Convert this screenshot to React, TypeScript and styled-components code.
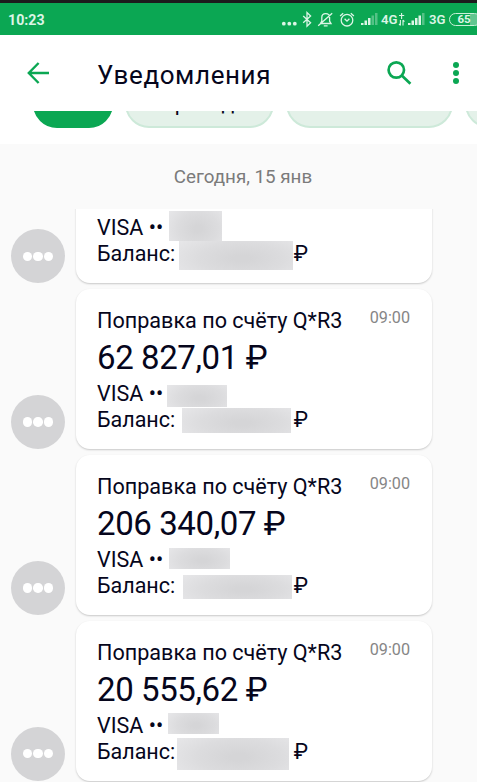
import styled, { createGlobalStyle } from "styled-components";

const GlobalStyle = createGlobalStyle`
  * {
    box-sizing: border-box;
  }
  body {
    margin: 0;
    background-color: #fafafa;
    font-family: Roboto, "Noto Sans", sans-serif;
    color: #06061c;
  }
`;

const Container = styled.div`
  width: 477px;
  height: 782px;
  display: flex;
  flex-direction: column;
  overflow: hidden;
  background-color: #fafafa;
`;

const StatusBar = styled.div`
  height: 35px;
  flex-shrink: 0;
  display: flex;
  align-items: center;
  padding-left: 8px;
  border-top: 3px solid #1c1c1c;
  background-color: #0ba753;
  color: #dcf5e6;
  .time {
    width: 273px;
    flex-shrink: 0;
    font-size: 14.2px;
    font-weight: 700;
    line-height: 30px;
    padding-top: 2px;
  }
  svg {
    display: block;
    flex-shrink: 0;
  }
`;

const Network = styled.span<{ $width: number }>`
  width: ${({ $width }) => $width}px;
  flex-shrink: 0;
  font-size: 13.2px;
  font-weight: 600;
  line-height: 30px;
  padding-top: 1px;
  white-space: nowrap;
`;

const Battery = styled.div`
  width: 32px;
  height: 13px;
  flex-shrink: 0;
  display: flex;
  align-items: center;
  padding-left: 7.5px;
  border: 1.3px solid #c9efd8;
  border-radius: 7px;
  background: linear-gradient(90deg, #0ba753 68%, #62c690 68%);
  font-size: 11.5px;
  font-weight: 700;
`;

const Toolbar = styled.header`
  height: 76px;
  flex-shrink: 0;
  display: flex;
  align-items: center;
  padding: 0 17px 0 26px;
  background-color: #fff;
  svg {
    display: block;
  }
  h1 {
    flex: 1;
    margin: 0 0 0 47px;
    padding-top: 3px;
    font-size: 26px;
    font-weight: 400;
    letter-spacing: 0.6px;
  }
  .menu {
    margin-left: 40px;
  }
`;

const Chips = styled.div`
  height: 33px;
  flex-shrink: 0;
  display: flex;
  align-items: flex-end;
  gap: 12px;
  padding: 0 0 16px 33px;
  overflow: hidden;
  background-color: #fff;
`;

const Chip = styled.div<{ $width: number; $active?: boolean }>`
  width: ${({ $width }) => $width}px;
  height: 48px;
  flex-shrink: 0;
  display: flex;
  align-items: center;
  justify-content: center;
  padding-bottom: 3px;
  border: 2px solid ${({ $active }) => ($active ? "#0ba753" : "#cde9d9")};
  border-radius: 24px;
  background-color: ${({ $active }) => ($active ? "#0ba753" : "#e4f1e9")};
  font-size: 21.3px;
  line-height: 24px;
`;

const DateLabel = styled.div`
  height: 65px;
  flex-shrink: 0;
  line-height: 67px;
  text-align: center;
  padding-left: 9px;
  font-size: 18.8px;
  color: #7b7b7b;
`;

const List = styled.div`
  flex: 1;
  min-height: 0;
  display: flex;
  flex-direction: column;
  justify-content: flex-end;
  gap: 6.2px;
  padding: 0 45px 1.4px 11px;
  overflow: hidden;
`;

const Row = styled.div`
  flex-shrink: 0;
  display: flex;
  align-items: flex-end;
  gap: 11px;
`;

const Avatar = styled.div`
  width: 54px;
  height: 54px;
  flex-shrink: 0;
  display: flex;
  align-items: center;
  justify-content: center;
  gap: 1px;
  border-radius: 50%;
  background-color: #d4d4d6;
  i {
    width: 9.5px;
    height: 9.5px;
    border-radius: 50%;
    background-color: #fff;
  }
`;

const Card = styled.div`
  flex: 1;
  height: 159.6px;
  display: flex;
  flex-direction: column;
  justify-content: flex-end;
  padding: 0 22px 16px 21px;
  border-radius: 14px;
  background-color: #fff;
  box-shadow: 0 1px 2px rgba(0, 0, 0, 0.2);
`;

const CardHead = styled.div`
  display: flex;
  justify-content: space-between;
  font-size: 21.6px;
  line-height: 26px;
  white-space: nowrap;
  time {
    font-size: 16.2px;
    line-height: 19px;
    color: #868686;
  }
`;

const Amount = styled.div`
  margin: 5px 0 3.7px;
  font-size: 33px;
  line-height: 38px;
  letter-spacing: -0.4px;
  white-space: nowrap;
`;

const Line = styled.div`
  width: 211px;
  height: 26px;
  display: flex;
  align-items: flex-start;
  font-size: 21.5px;
  line-height: 26px;
  .label {
    width: 70px;
    white-space: nowrap;
  }
  .currency {
    margin-left: auto;
  }
`;

interface MaskType {
  left: number;
  top: number;
  width: number;
  height: number;
}

const Mask = styled.span<{ $box: MaskType }>`
  width: ${({ $box }) => $box.width}px;
  height: ${({ $box }) => $box.height}px;
  margin: ${({ $box }) => `${$box.top}px 0 0 ${$box.left}px`};
  flex-shrink: 0;
  background: radial-gradient(ellipse 75% 110% at 55% 60%, #d5d5d7 10%, #dcdcde 50%, #e9e9eb 100%);
`;

interface NoticeType {
  id: number;
  amount?: string;
  card: MaskType;
  balance: MaskType;
}

const notices: NoticeType[] = [
  {
    id: 1,
    card: { left: 2, top: -4, width: 53, height: 30 },
    balance: { left: 12, top: 0, width: 114, height: 29 },
  },
  {
    id: 2,
    amount: "62 827,01 ₽",
    card: { left: 0, top: 4, width: 60, height: 22 },
    balance: { left: 15, top: 1, width: 109, height: 25 },
  },
  {
    id: 3,
    amount: "206 340,07 ₽",
    card: { left: 2, top: 1, width: 61, height: 21 },
    balance: { left: 16, top: 2, width: 109, height: 24 },
  },
  {
    id: 4,
    amount: "20 555,62 ₽",
    card: { left: 1, top: 0, width: 51, height: 21 },
    balance: { left: 10, top: -1, width: 112, height: 32 },
  },
];

const Signal = ({ dim }: { dim: number }): JSX.Element => (
  <svg width="17" height="12" viewBox="0 0 17 12" fill="#dcf5e6">
    {[2, 4.5, 7, 9.5, 12].map((h, i) => (
      <rect key={h} x={i * 3.5} y={12 - h} width="2.5" height={h} opacity={i >= dim ? 0.35 : 1} />
    ))}
  </svg>
);

const App = () => {
  return (
    <>
      <GlobalStyle />
      <Container>
        <StatusBar>
          <span className="time">10:23</span>
          <svg width="21" height="32" viewBox="0 0 21 32" fill="#dcf5e6">
            <circle cx="2.8" cy="20.7" r="1.9" />
            <circle cx="8.3" cy="20.7" r="1.9" />
            <circle cx="13.8" cy="20.7" r="1.9" />
          </svg>
          <svg width="15" height="32" viewBox="0 0 15 32" fill="none" stroke="#dcf5e6" strokeWidth="1.3">
            <path d="M1.2 13L8.6 19.8L5 23.2V9.6L8.6 13L1.2 19.8" />
          </svg>
          <svg width="22" height="32" viewBox="0 0 22 32" fill="none" stroke="#dcf5e6" strokeWidth="1.3">
            <path d="M3.4 20.5H14L12.6 18.2V14.6C12.6 12 10.8 10.7 8.7 10.7C6.6 10.7 4.8 12 4.8 14.6V18.2L3.4 20.5M6.8 22.8H10.6M1.2 22.8L15.2 10.2" />
          </svg>
          <svg width="22" height="32" viewBox="0 0 22 32" fill="none" stroke="#dcf5e6" strokeWidth="1.3">
            <circle cx="8" cy="17.2" r="5.8" />
            <path d="M5.6 15.8L8 18.2L10.4 15.8M1.1 13L4.2 10.2M14.9 13L11.8 10.2" />
          </svg>
          <Signal dim={3} />
          <svg width="3" height="32" />
          <Network $width={16}>4G</Network>
          <svg width="11" height="32" viewBox="0 0 11 32" fill="none" stroke="#dcf5e6" strokeWidth="1.1">
            <path d="M4.6 10V16M2 12.5H7.2M3.4 17V22.5M6 17V22.5M2 20.8L3.4 22.5M6 17L7.4 18.6" />
          </svg>
          <Signal dim={4} />
          <svg width="4" height="32" />
          <Network $width={20}>3G</Network>
          <Battery>65</Battery>
        </StatusBar>
        <Toolbar>
          <svg width="24" height="24" viewBox="0 0 24 24" fill="none" stroke="#0ba753" strokeWidth="2.4">
            <path d="M23 12H3.2M12.6 2L2.8 12L12.6 22" />
          </svg>
          <h1>Уведомления</h1>
          <svg width="26" height="26" viewBox="0 0 26 26" fill="none" stroke="#0ba753" strokeWidth="2.7">
            <circle cx="10.3" cy="10" r="7.7" />
            <path d="M15.8 15.5L24.4 23.8" />
          </svg>
          <svg className="menu" width="8" height="24" viewBox="0 0 8 24" fill="#0ba753">
            <circle cx="4" cy="4" r="3" />
            <circle cx="4" cy="12" r="3" />
            <circle cx="4" cy="20" r="3" />
          </svg>
        </Toolbar>
        <Chips>
          <Chip $width={80} $active />
          <Chip $width={149}>Переводы</Chip>
          <Chip $width={167} />
          <Chip $width={120} />
        </Chips>
        <DateLabel>Сегодня, 15 янв</DateLabel>
        <List>
          {notices.map((notice) => (
            <Row key={notice.id}>
              <Avatar>
                <i />
                <i />
                <i />
              </Avatar>
              <Card>
                {notice.amount ? (
                  <>
                    <CardHead>
                      Поправка по счёту Q*R3
                      <time>09:00</time>
                    </CardHead>
                    <Amount>{notice.amount}</Amount>
                  </>
                ) : null}
                <Line>
                  <span className="label">VISA ••</span>
                  <Mask $box={notice.card} />
                </Line>
                <Line>
                  <span className="label">Баланс:</span>
                  <Mask $box={notice.balance} />
                  <span className="currency">₽</span>
                </Line>
              </Card>
            </Row>
          ))}
        </List>
      </Container>
    </>
  );
};

export default App;
